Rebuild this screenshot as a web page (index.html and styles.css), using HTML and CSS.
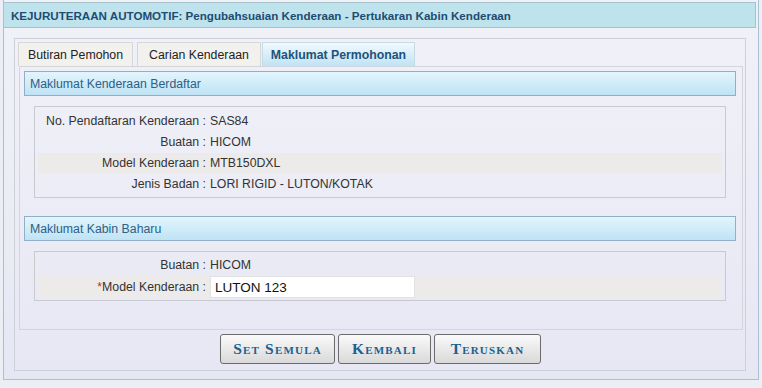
FILE: index.html
```html
<!DOCTYPE html>
<html lang="ms">

<head>
    <meta charset="UTF-8">
    <title>Pertukaran Kabin Kenderaan</title>
    <link rel="stylesheet" href="styles.css">
</head>

<body>
    <div class="frame">
        <div class="page-title">KEJURUTERAAN AUTOMOTIF: Pengubahsuaian Kenderaan - Pertukaran Kabin Kenderaan</div>

        <div class="tabs">
            <ul class="tab-list">
                <li class="tab tab-pemohon">Butiran Pemohon</li>
                <li class="tab tab-carian">Carian Kenderaan</li>
                <li class="tab tab-maklumat active">Maklumat Permohonan</li>
            </ul>

            <div class="tab-panel">
                <div class="section-title">Maklumat Kenderaan Berdaftar</div>
                <div class="info-box">
                    <div class="row">
                        <span class="label">No. Pendaftaran Kenderaan :</span>
                        <span class="value">SAS84</span>
                    </div>
                    <div class="row">
                        <span class="label">Buatan :</span>
                        <span class="value">HICOM</span>
                    </div>
                    <div class="row shaded">
                        <span class="label">Model Kenderaan :</span>
                        <span class="value">MTB150DXL</span>
                    </div>
                    <div class="row">
                        <span class="label">Jenis Badan :</span>
                        <span class="value">LORI RIGID - LUTON/KOTAK</span>
                    </div>
                </div>

                <div class="section-title second">Maklumat Kabin Baharu</div>
                <div class="info-box small">
                    <div class="row">
                        <span class="label">Buatan :</span>
                        <span class="value">HICOM</span>
                    </div>
                    <div class="row shaded input-row">
                        <label class="label" for="modelBaru"><span class="req">*</span>Model Kenderaan :</label>
                        <span class="value"><input type="text" id="modelBaru" value="LUTON 123"></span>
                    </div>
                </div>
            </div>

            <div class="actions">
                <button class="btn btn-reset">Set Semula</button>
                <button class="btn btn-back">Kembali</button>
                <button class="btn btn-next">Teruskan</button>
            </div>
        </div>
    </div>
</body>

</html>
```

FILE: styles.css
```css
body {
    font-family: "Liberation Sans", Arial, sans-serif;
    font-size: 12.3px;
    background-color: #eceef6;
    margin: 0;
    padding: 0;
}

.frame {
    margin: 0 3px;
    height: 380px;
    padding-top: 2px;
    border: 1px solid #a9bfd3;
    border-top: none;
    background: linear-gradient(#f1f2f8, #e6e7f3);
    box-sizing: border-box;
}

.page-title {
    height: 26px;
    line-height: 25px;
    margin-right: 2px;
    padding-left: 7px;
    background-color: #bfe3ec;
    border: 1px solid #a4c2cc;
    border-left: none;
    box-sizing: border-box;
    color: #1d4c72;
    font-size: 11.6px;
    font-weight: bold;
}

.tabs {
    margin: 10px 12px 0 10px;
    height: 333px;
    padding: 3px 2px 0 3px;
    border: 1px solid #cdd0d8;
    box-sizing: border-box;
}

.tab-list {
    display: flex;
    gap: 4px;
    margin: 0;
    padding: 0;
    list-style: none;
}

.tab {
    height: 24px;
    line-height: 24px;
    background-color: #f3f1ee;
    border: 1px solid #d7d7d7;
    border-bottom: none;
    box-sizing: border-box;
    color: #222;
    text-align: center;
}

.tab-pemohon {
    width: 115px;
}

.tab-carian {
    width: 124px;
}

.tab-maklumat {
    width: 153px;
}

.tab.active {
    margin-left: -3px;
    background: linear-gradient(#f2f9fd, #c0e3f4);
    border-color: #c7dbe6;
    color: #1e5379;
    font-weight: bold;
}

.tab-panel {
    height: 264px;
    margin-left: 1px;
    padding: 4px 6px 0 4px;
    border: 1px solid #d2d5dc;
    box-sizing: border-box;
}

.section-title {
    height: 25px;
    line-height: 24px;
    padding-left: 5px;
    background: linear-gradient(#e2f5fd, #bfe3f5);
    border: 1px solid #8fb0c6;
    box-sizing: border-box;
    color: #2d6085;
}

.section-title.second {
    margin-top: 18px;
}

.info-box {
    margin: 10px 10px 0 10px;
    padding: 4px 3px 2px 3px;
    border: 1px solid #c9cacd;
    color: #333;
}

.info-box.small {
    padding-top: 3px;
    padding-bottom: 2px;
}

.row {
    display: flex;
    height: 21px;
    line-height: 21px;
}

.row.shaded {
    background-color: #ecebea;
}

.row.input-row {
    height: 22px;
    line-height: 22px;
}

.label {
    width: 168px;
    text-align: right;
}

.value {
    padding-left: 4px;
}

.req {
    color: #d21f1f;
}

input[type="text"] {
    width: 205px;
    height: 22px;
    padding: 0 4px;
    border: 1px solid #e2e2e2;
    box-sizing: border-box;
    font-family: "Liberation Sans", Arial, sans-serif;
    font-size: 13.5px;
    color: #111;
    vertical-align: top;
}

.actions {
    display: flex;
    justify-content: center;
    gap: 3px;
    padding-top: 4px;
}

.btn {
    height: 30px;
    padding: 0;
    background: linear-gradient(#fafafa, #d9d9d9);
    border: 1px solid #6b6b6b;
    border-radius: 3px;
    color: #1b6190;
    font-family: "Liberation Serif", "Times New Roman", serif;
    font-size: 15.5px;
    font-weight: bold;
    font-variant: small-caps;
    letter-spacing: 1.2px;
    text-align: center;
    cursor: pointer;
}

.btn-reset {
    width: 115px;
}

.btn-back {
    width: 93px;
}

.btn-next {
    width: 107px;
}
```
